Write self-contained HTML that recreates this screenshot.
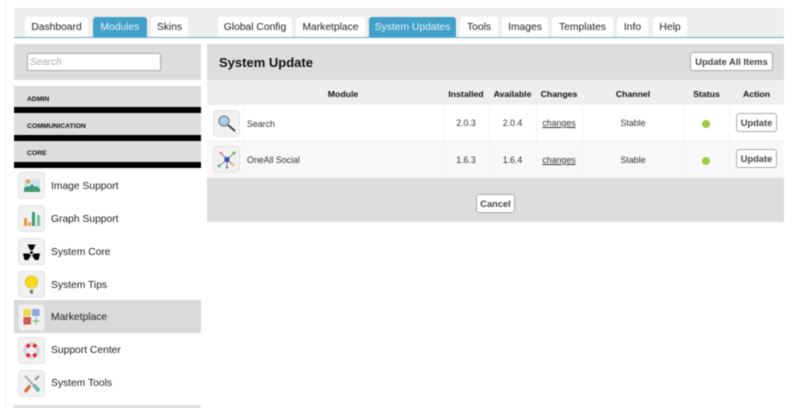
<!DOCTYPE html>
<html><head><meta charset="utf-8"><style>
html,body{margin:0;padding:0;background:#fff}
#p{position:relative;width:800px;height:408px;overflow:hidden;background:#fff;font-family:"Liberation Sans",sans-serif;font-size:10px;color:#333;filter:blur(.42px)}
#p div,#p svg{position:absolute}
.t{top:17px;height:20px;line-height:22px;background:#fff;text-align:center;border-radius:3px 3px 0 0;font-size:10.3px;color:#222}
.a{background:#41a0c8;color:#e8f4fa}
.g{background:#ddd}
.h{left:27px;font-weight:bold;font-size:6.8px;color:#111;line-height:10px}
.k{background:#000;left:14px;width:187px;height:6px}
.ic{width:25px;height:25px;background:#f1f1f1;border:1px solid #e3e3e3;border-radius:4px}
.ic svg{left:0;top:0}
.l{left:51px;font-size:10.3px;line-height:14px;color:#222}
.th{top:80px;height:25px;line-height:29px;text-align:center;font-weight:bold;font-size:8.7px;color:#111}
.c{text-align:center;line-height:37px;font-size:8.8px;color:#333}
.v{width:1px;top:105px;height:73px;background:#f3f3f3}
.b{background:#fff;border:1px solid #aaa;border-radius:3px;font-weight:bold;text-align:center;color:#444;box-sizing:border-box;font-size:9.3px;line-height:19px}
.d{width:8px;height:8px;border-radius:50%;background:#9acd3c}
u{text-decoration:underline}
</style></head><body><div id="p">
<div style="left:5px;top:0;width:1px;height:408px;background:#f4f4f4"></div>
<div style="left:14px;top:8px;width:770px;height:29px;background:#eee"></div>
<div style="left:14px;top:37px;width:770px;height:1px;background:#5fb0d2"></div>
<div class="t" style="left:25px;width:63px">Dashboard</div>
<div class="t a" style="left:93px;width:54px">Modules</div>
<div class="t" style="left:151px;width:37px">Skins</div>
<div class="t" style="left:218px;width:74px">Global Config</div>
<div class="t" style="left:296px;width:69px">Marketplace</div>
<div class="t a" style="left:369px;width:87px">System Updates</div>
<div class="t" style="left:460px;width:38px">Tools</div>
<div class="t" style="left:502px;width:46px">Images</div>
<div class="t" style="left:552px;width:61px">Templates</div>
<div class="t" style="left:617px;width:31px">Info</div>
<div class="t" style="left:653px;width:34px">Help</div>

<div class="g" style="left:14px;top:44px;width:187px;height:36px"></div>
<div style="left:27px;top:53px;width:132px;height:16px;background:#fff;border:1px solid #aaa;border-radius:2px;font-style:italic;font-size:10px;line-height:18px;color:#aaa;text-indent:2px">Search</div>
<div class="g" style="left:14px;top:86px;width:187px;height:21px"></div>
<div class="k" style="top:107px"></div>
<div class="h" style="top:95px">ADMIN</div>
<div class="g" style="left:14px;top:113px;width:187px;height:22px"></div>
<div class="k" style="top:135px"></div>
<div class="h" style="top:122px">COMMUNICATION</div>
<div class="g" style="left:14px;top:141px;width:187px;height:21px"></div>
<div class="k" style="top:162px"></div>
<div class="h" style="top:149px">CORE</div>

<div style="left:14px;top:300px;width:187px;height:33px;background:#d9d9d9"></div>
<div class="g" style="left:14px;top:405px;width:187px;height:3px"></div>

<div class="ic" style="left:18px;top:172px"><svg width="25" height="25" viewBox="0 0 25 25"><rect x="5" y="6" width="16" height="13" fill="#cfe6ea"/><circle cx="9" cy="8.500" r="2" fill="#e8973a"/><path d="M5 19v-4l3-2 2 1 3-3 3 3 2-1 3 3v3z" fill="#3f9a78"/></svg></div>
<div class="l" style="top:180px">Image Support</div>
<div class="ic" style="left:18px;top:205px"><svg width="25" height="25" viewBox="0 0 25 25"><rect x="5" y="12" width="3" height="8" fill="#e8913a"/><rect x="9" y="16" width="3" height="4" fill="#eda255"/><rect x="13" y="6" width="3" height="14" fill="#3f9a78"/><rect x="18" y="9" width="3" height="11" fill="#7cc79c"/></svg></div>
<div class="l" style="top:213px">Graph Support</div>
<div class="ic" style="left:18px;top:238px"><svg width="25" height="25" viewBox="0 0 25 25"><path d="M8.500 5.500h8l-2.500 5.500h-3z M4 14.500h6l2 2-3 4.500h-3.500z M21 14.500h-6l-2 2 3 4.500h3.500z" fill="#000"/><circle cx="12.500" cy="13.500" r="1.500" fill="#000"/></svg></div>
<div class="l" style="top:246px">System Core</div>
<div class="ic" style="left:18px;top:271px"><svg width="25" height="25" viewBox="0 0 25 25"><circle cx="12.500" cy="10" r="6" fill="#f7dc1e" stroke="#e6c215" stroke-width="1"/><path d="M10.500 15h4v4h-4z" fill="#e9e3a0"/><rect x="11" y="18" width="3" height="3.500" fill="#777"/></svg></div>
<div class="l" style="top:279px">System Tips</div>
<div class="ic" style="left:18px;top:304px;background:#f0f0f0"><svg width="25" height="25" viewBox="0 0 25 25"><rect x="4.500" y="4" width="7.500" height="7" fill="#eed654"/><rect x="13" y="4" width="7.500" height="7" fill="#8aa9dc"/><rect x="4.500" y="12" width="7.500" height="7.500" fill="#cf5a4e"/><path d="M17 12.500v7M13.500 16h7" stroke="#68b87c" stroke-width="1"/></svg></div>
<div class="l" style="top:311px">Marketplace</div>
<div class="ic" style="left:18px;top:337px"><svg width="25" height="25" viewBox="0 0 25 25"><circle cx="12.500" cy="12.500" r="6.500" fill="none" stroke="#d5d5e5" stroke-width="3.500"/><path d="M8 6.500l2.500 2.500M17 6.500l-2.500 2.500M8 18.500l2.500-2.500M17 18.500l-2.500-2.500" stroke="#e8222a" stroke-width="3.500"/></svg></div>
<div class="l" style="top:344px">Support Center</div>
<div class="ic" style="left:18px;top:370px"><svg width="25" height="25" viewBox="0 0 25 25"><path d="M6 5l14 15" stroke="#aaa" stroke-width="2"/><path d="M20 5l-4 4M11 14l-5 6" stroke="#999" stroke-width="2"/><path d="M6 21l5-6" stroke="#df6b2d" stroke-width="3"/><path d="M15 14l5 6" stroke="#3fa7c4" stroke-width="3.500"/><path d="M15.500 14.500l4 4.500" stroke="#d9cf4c" stroke-width="1"/></svg></div>
<div class="l" style="top:377px">System Tools</div>

<div class="g" style="left:207px;top:44px;width:577px;height:36px"></div>
<div style="left:219px;top:54px;font-size:13px;font-weight:bold;line-height:17px;color:#111">System Update</div>
<div class="b" style="left:690px;top:52px;width:83px;height:19px">Update All Items</div>
<div style="left:207px;top:80px;width:577px;height:25px;background:#eee"></div>
<div style="left:207px;top:105px;width:577px;height:36px;background:#fff"></div>
<div style="left:207px;top:141px;width:577px;height:37px;background:#f8f8f8"></div>
<div style="left:207px;top:141px;width:577px;height:1px;background:#f0f0f0"></div>
<div class="g" style="left:207px;top:178px;width:577px;height:44px"></div>
<div class="v" style="left:243px"></div><div class="v" style="left:443px"></div><div class="v" style="left:489px"></div><div class="v" style="left:536px"></div><div class="v" style="left:582px"></div><div class="v" style="left:684px"></div><div class="v" style="left:729px"></div>
<div class="th" style="left:243px;width:200px">Module</div>
<div class="th" style="left:443px;width:46px">Installed</div>
<div class="th" style="left:489px;width:47px">Available</div>
<div class="th" style="left:536px;width:46px">Changes</div>
<div class="th" style="left:582px;width:102px">Channel</div>
<div class="th" style="left:684px;width:45px">Status</div>
<div class="th" style="left:729px;width:55px">Action</div>

<div class="ic" style="left:213px;top:110px"><svg width="25" height="25" viewBox="0 0 25 25"><circle cx="10" cy="10" r="5" fill="#a9cdea" stroke="#8b8fa0" stroke-width="1.500"/><path d="M14 14l7 6" stroke="#444" stroke-width="2"/></svg></div>
<div class="ic" style="left:213px;top:146px"><svg width="25" height="25" viewBox="0 0 25 25"><path d="M13 12.500L20 6M13 12.500L5 19M13 12.500L7 6M13 12.500L19 18M13 12.500V20" stroke="#666" stroke-width=".8"/><rect x="10.500" y="10" width="5" height="5" fill="#3f55b0"/><circle cx="20" cy="6" r="1.500" fill="#55b560"/><circle cx="5" cy="19" r="1.500" fill="#55b580"/><circle cx="7" cy="6" r="1.300" fill="#d57a8a"/><circle cx="19" cy="18" r="1.300" fill="#e6c040"/><circle cx="13" cy="20.500" r="1.300" fill="#7a80c8"/></svg></div>
<div style="left:247px;top:118px;font-size:8.800px;line-height:13px">Search</div>
<div style="left:247px;top:154px;font-size:8.800px;line-height:13px">OneAll Social</div>

<div class="c" style="left:443px;top:105px;width:46px">2.0.3</div>
<div class="c" style="left:489px;top:105px;width:47px">2.0.4</div>
<div class="c" style="left:536px;top:105px;width:46px"><u>changes</u></div>
<div class="c" style="left:582px;top:105px;width:102px">Stable</div>
<div class="d" style="left:702px;top:120px"></div>
<div class="b" style="left:736px;top:113px;width:41px;height:19px">Update</div>
<div class="c" style="left:443px;top:142px;width:46px">1.6.3</div>
<div class="c" style="left:489px;top:142px;width:47px">1.6.4</div>
<div class="c" style="left:536px;top:142px;width:46px"><u>changes</u></div>
<div class="c" style="left:582px;top:142px;width:102px">Stable</div>
<div class="d" style="left:702px;top:157px"></div>
<div class="b" style="left:736px;top:149px;width:41px;height:19px">Update</div>
<div class="b" style="left:476px;top:194px;width:39px;height:19px">Cancel</div>
</div></body></html>
